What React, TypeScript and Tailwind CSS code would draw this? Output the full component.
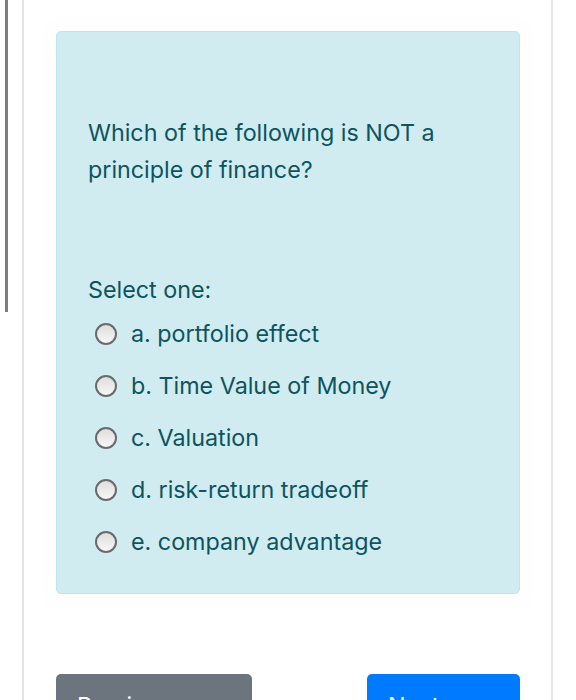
import React from "react";

const options = [
  "a. portfolio effect",
  "b. Time Value of Money",
  "c. Valuation",
  "d. risk-return tradeoff",
  "e. company advantage",
];

function Radio() {
  return (
    <span className="w-[22px] h-[22px] shrink-0 rounded-full border-2 border-[#6a6a6a] bg-gradient-to-b from-[#dedede] to-[#f7f7f7]" />
  );
}

export default function App() {
  return (
    <div
      className="relative w-[576px] h-[700px] overflow-hidden bg-white text-[23.3px]"
      style={{ fontFamily: "Inter, 'Liberation Sans', sans-serif" }}
    >
      <div className="absolute left-[5px] top-0 w-[3px] h-[312px] bg-[#7d7d7d]" />
      <div className="ml-[22px] mr-[23px] h-full border-l-2 border-r-2 border-[#e4e4e4] pt-[31px] pl-[32px] pr-[31px]">
        <div className="rounded-[5px] border border-[#bee5eb] bg-[#d1ecf1] text-[#0c5460] pl-[31px] pr-[16px] pt-[82px] pb-[25px] shadow-[0_0_0_14px_#fdfefd]">
          <p className="leading-[37px]">
            Which of the following is NOT a
            <br />
            principle of finance?
          </p>
          <p className="mt-[84px] leading-[36px]">Select one:</p>
          <div className="flex flex-col">
            {options.map((o) => (
              <div key={o} className="h-[52px] flex items-center pl-[7px] gap-[14px]">
                <Radio />
                <span className="leading-[30px]">{o}</span>
              </div>
            ))}
          </div>
        </div>
        <div className="mt-[80px] flex justify-between items-start">
          <button className="w-[196px] rounded-[5px] bg-[#6c757d] text-white text-left pl-[21px] pt-[15px] pb-[14px] leading-[33px]">
            Previous page
          </button>
          <button className="w-[153px] rounded-[5px] bg-[#007bff] text-white text-left pl-[21px] pt-[15px] pb-[14px] leading-[33px]">
            Next page
          </button>
        </div>
      </div>
    </div>
  );
}
